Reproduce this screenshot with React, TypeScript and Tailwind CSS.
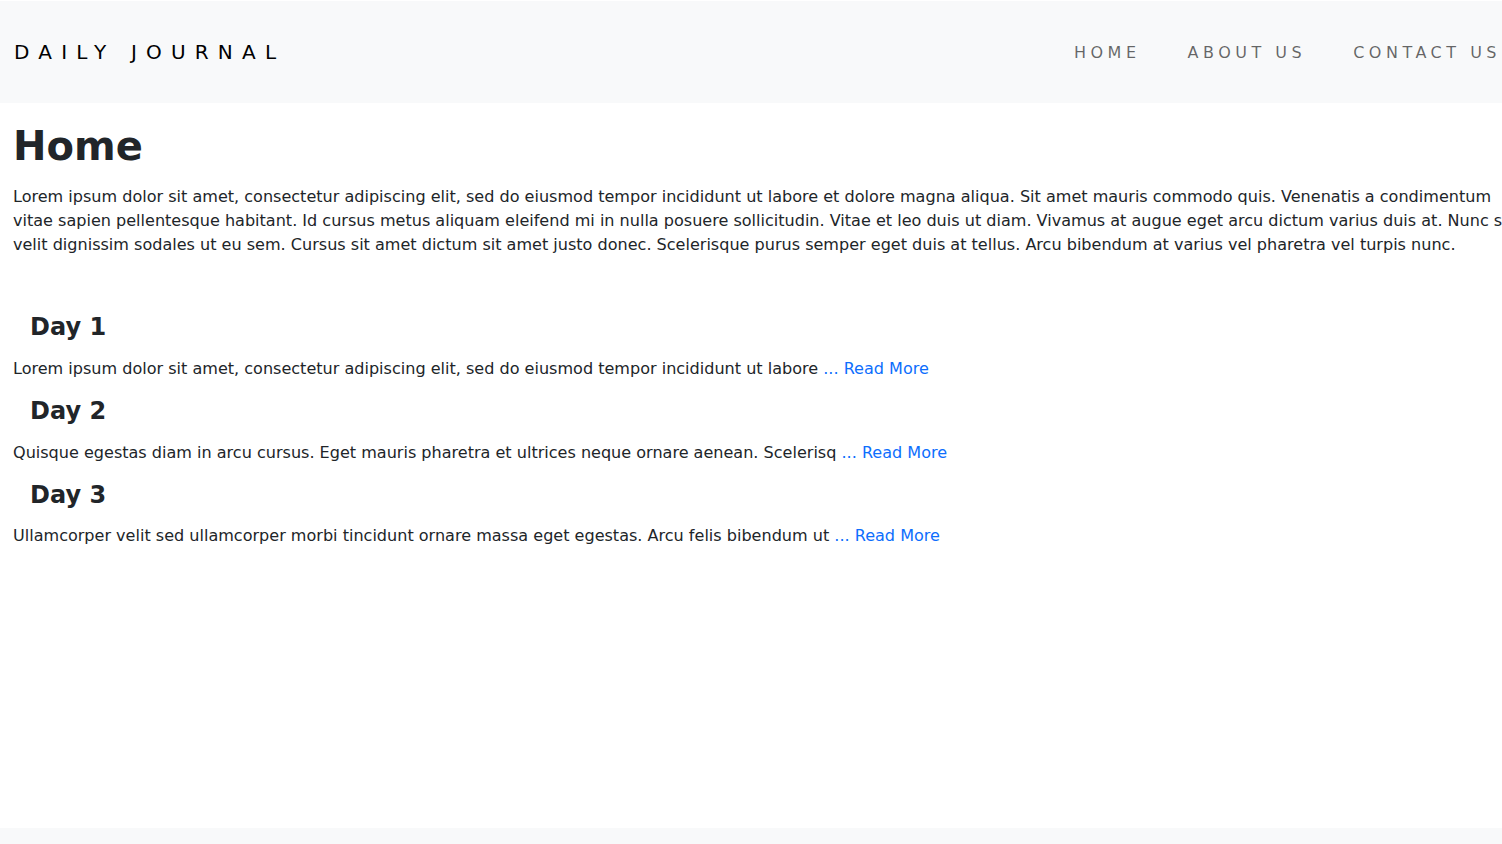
import React from 'react';

const intro =
  'Lorem ipsum dolor sit amet, consectetur adipiscing elit, sed do eiusmod tempor incididunt ut labore et dolore magna aliqua. Sit amet mauris commodo quis. Venenatis a condimentum vitae sapien pellentesque habitant. Id cursus metus aliquam eleifend mi in nulla posuere sollicitudin. Vitae et leo duis ut diam. Vivamus at augue eget arcu dictum varius duis at. Nunc sed velit dignissim sodales ut eu sem. Cursus sit amet dictum sit amet justo donec. Scelerisque purus semper eget duis at tellus. Arcu bibendum at varius vel pharetra vel turpis nunc.';

const posts = [
  { title: 'Day 1', body: 'Lorem ipsum dolor sit amet, consectetur adipiscing elit, sed do eiusmod tempor incididunt ut labore' },
  { title: 'Day 2', body: 'Quisque egestas diam in arcu cursus. Eget mauris pharetra et ultrices neque ornare aenean. Scelerisq' },
  { title: 'Day 3', body: 'Ullamcorper velit sed ullamcorper morbi tincidunt ornare massa eget egestas. Arcu felis bibendum ut' },
];

const App: React.FC = () => {
  return (
    <div
      className="w-full min-h-screen overflow-hidden bg-white text-[#212529] flex flex-col"
      style={{ fontFamily: '"DejaVu Sans", Verdana, sans-serif' }}
    >
      {/* Navbar */}
      <header className="mt-px h-[102px] w-full bg-[#f8f9fa]">
        <div className="w-[1501px] h-full pl-[14px] flex items-center justify-between">
          <a className="text-[20px] tracking-[9.2px] text-black leading-none">DAILY JOURNAL</a>
          <nav className="flex items-center gap-[47px] text-[16px] tracking-[4.5px] text-black/60 pt-px">
            <a>HOME</a>
            <a>ABOUT US</a>
            <a>CONTACT US</a>
          </nav>
        </div>
      </header>

      {/* Content */}
      <main className="flex-1 px-[13px] pt-[19px] text-[16.06px]">
        <h1 className="text-[40px] font-bold leading-[1.2] mb-[15px]">Home</h1>
        <p className="w-[1515px] leading-6 mb-[56px]">{intro}</p>

        {posts.map((p) => (
          <div key={p.title}>
            <h2 className="pl-[17px] text-[24px] font-bold leading-[1.2] mb-[15px]">{p.title}</h2>
            <p className="leading-6 mb-4">
              {p.body} <a className="text-[#0d6efd]">... Read More</a>
            </p>
          </div>
        ))}
      </main>

      <footer className="h-4 w-full bg-[#f8f9fa]" />
    </div>
  );
};

export default App;
